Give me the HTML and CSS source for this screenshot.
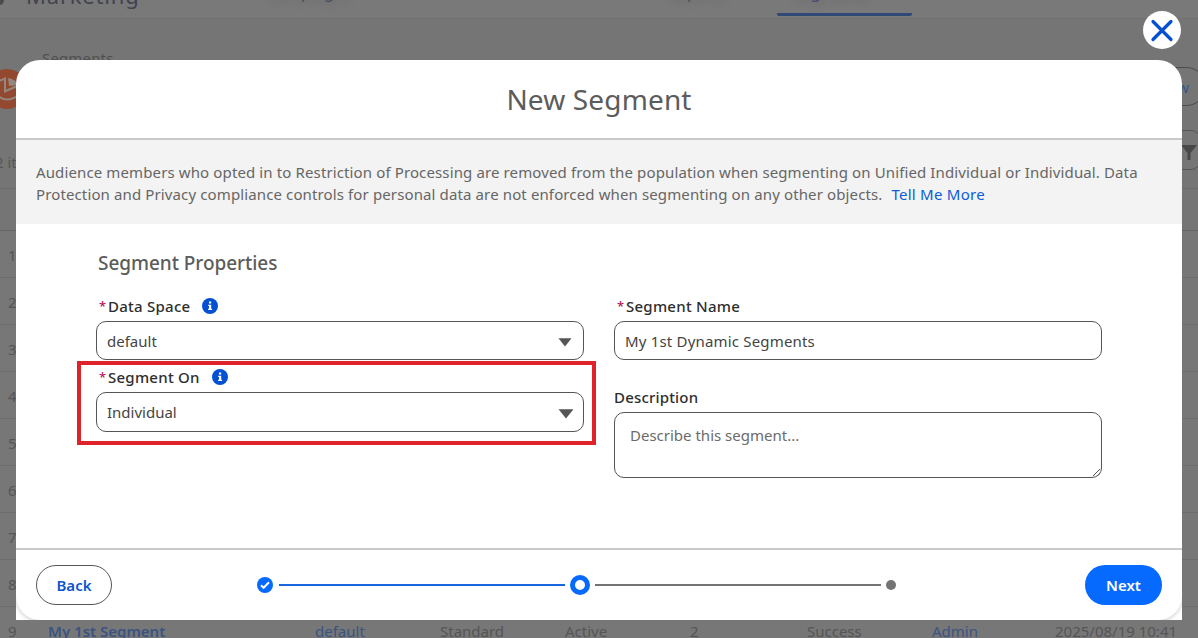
FILE: index.html
```html
<!DOCTYPE html>
<html lang="en">
<head>
<meta charset="utf-8">
<title>New Segment</title>
<link rel="stylesheet" href="styles.css">
</head>
<body>
<div class="app">
  <nav class="nav">
    <span class="dot"></span>
    <span class="brand">Marketing</span>
    <span class="tab tab-campaigns">Campaigns</span>
    <span class="tab tab-reports">Reports</span>
    <span class="tab tab-segments">Segments</span>
  </nav>
  <header class="page-head">
    <span class="crumb">Segments</span>
    <div class="head-row">
      <svg class="logo" viewBox="0 0 40 40"><circle cx="20" cy="20" r="20" fill="#93492f"/><path d="M12 12l6-2.5v13l11-5" fill="none" stroke="#93887f" stroke-width="2"/><path d="M21 9q7 1 10 7l-9 1z" fill="#93887f"/><path d="M10 26q9 9 22 0" fill="none" stroke="#93887f" stroke-width="2"/></svg>
      <span class="new-btn">New</span>
    </div>
    <div class="tools-row">
      <span class="count">2 items</span>
      <span class="filter-btn"><svg width="16" height="15" viewBox="0 0 16 15"><path d="M0 0h16L9.5 8v7h-3V8z" fill="#484848"/></svg></span>
    </div>
  </header>
  <div class="table">
    <div class="thead"></div>
    <div class="row"><span class="num">1</span></div>
    <div class="row"><span class="num">2</span></div>
    <div class="row"><span class="num">3</span></div>
    <div class="row"><span class="num">4</span></div>
    <div class="row"><span class="num">5</span></div>
    <div class="row"><span class="num">6</span></div>
    <div class="row"><span class="num">7</span></div>
    <div class="row"><span class="num">8</span></div>
    <div class="row"><span class="num">9</span><b class="lnk">My 1st Segment</b><span class="lnk">default</span><span>Standard</span><span>Active</span><span>2</span><span>Success</span><span class="lnk">Admin</span><span class="date">2025/08/19 10:41</span></div>
  </div>
</div>

<button class="close" aria-label="Close"><svg width="38" height="38" viewBox="0 0 38 38"><path d="M10 10.5L28 28.5M28 10.5L10 28.5" stroke="#0450d2" stroke-width="3.2" stroke-linecap="round"/></svg></button>

<section class="modal">
  <header class="modal-head"><h1>New Segment</h1></header>
  <div class="notice">
    <div class="n1">Audience members who opted in to Restriction of Processing are removed from the population when segmenting on Unified Individual or Individual. Data</div>
    <div class="n2">Protection and Privacy compliance controls for personal data are not enforced when segmenting on any other objects. <a>Tell Me More</a></div>
  </div>
  <div class="body">
    <h2>Segment Properties</h2>
    <div class="cols">
      <div class="col">
        <div class="label req">Data Space <svg class="info" viewBox="0 0 16 16"><circle cx="8" cy="8" r="8" fill="#0450d2"/><path d="M7 3.5h2.2v2H7zM6.2 6.8h3v4h.9v1.3H6.1v-1.3H7V8h-.8z" fill="#fff"/></svg></div>
        <div class="input select"><span>default</span><svg class="arrow" width="14" height="9" viewBox="0 0 14 9"><path d="M.5 .3h13L7 8.6z" fill="#555"/></svg></div>
        <div class="label req second">Segment On <svg class="info" viewBox="0 0 16 16"><circle cx="8" cy="8" r="8" fill="#0450d2"/><path d="M7 3.5h2.2v2H7zM6.2 6.8h3v4h.9v1.3H6.1v-1.3H7V8h-.8z" fill="#fff"/></svg></div>
        <div class="input select tall"><span>Individual</span><svg class="arrow" width="16" height="10" viewBox="0 0 16 10"><path d="M.5 .3h15L8 9.6z" fill="#555"/></svg></div>
        <div class="highlight"></div>
      </div>
      <div class="col">
        <div class="label req name">Segment Name</div>
        <div class="input"><span class="name-val">My 1st Dynamic Segments</span></div>
        <div class="label desc">Description</div>
        <div class="area"><span>Describe this segment...</span><svg class="grip" width="9" height="9" viewBox="0 0 9 9"><path d="M1 8L8 1M5 8.2L8.2 5" stroke="#555"/></svg></div>
      </div>
    </div>
  </div>
  <footer class="foot">
    <button class="btn">Back</button>
    <div class="steps">
      <svg class="done" width="16" height="16" viewBox="0 0 16 16"><circle cx="8" cy="8" r="8" fill="#066afe"/><path d="M4 8.3l2.6 2.5L12 5.3" fill="none" stroke="#fff" stroke-width="2"/></svg>
      <span class="line blue"></span>
      <span class="current"></span>
      <span class="line"></span>
      <span class="todo"></span>
    </div>
    <button class="btn primary">Next</button>
  </footer>
</section>
</body>
</html>
```
FILE: styles.css
```css
* { box-sizing: border-box; }
body {
  margin: 0;
  width: 1198px;
  height: 638px;
  overflow: hidden;
  position: relative;
  font: 15px/22px "Noto Sans", sans-serif;
  color: #2e2e2e;
  background: #757575;
}
h1, h2 { margin: 0; }
button { font-family: inherit; padding: 0; border: 0; }

/* dimmed page */
.app { position: absolute; inset: 0; overflow: hidden; color: #555; }
.nav { height: 19px; background: #797979; border-bottom: 1px solid #717171; display: flex; }
.dot { width: 8px; height: 10px; margin: -5px 0 0 -4px; border-radius: 50%; background: #4c4c4c; }
.brand { width: 125px; margin: -21px 0 0 22px; font-size: 22px; line-height: 32px; color: #40444f; letter-spacing: .8px; }
.tab { margin-top: -17px; line-height: 19px; font-size: 16px; height: 33px; color: #454d5e; text-shadow: 0 4px 6px #5554; }
.tab-campaigns { margin-left: 116px; width: 90px; }
.tab-reports { margin-left: 311px; width: 109px; }
.tab-segments { width: 135px; padding-left: 16px; border-bottom: 3px solid #304977; border-radius: 0 0 2px 2px; color: #4b426e; }
.page-head { height: 170px; border-bottom: 1px solid #6c6c6c; }
.crumb { display: block; padding: 28px 0 0 42px; color: #4f4f4f; letter-spacing: .15px; }
.head-row { display: flex; justify-content: space-between; }
.logo { width: 40px; height: 40px; margin: 0 0 0 -13px; }
.new-btn { width: 76px; height: 39px; margin: -2px -8px 0 0; padding: 8px 16px 0 0; text-align: right; border: 1px solid #4b4b4b; border-radius: 20px; color: #3a5585; }
.tools-row { display: flex; justify-content: space-between; }
.count { margin: 42px 0 0 -5px; }
.filter-btn { width: 60px; height: 40px; margin: 21px -3px 0 0; border: 1px solid #555; border-radius: 10px; padding: 12px 0 0 39px; }
.thead { height: 42px; border-bottom: 1px solid #656565; }
.row { height: 47px; border-bottom: 1px solid #6d6d6d; display: grid; grid-template-columns: 48px 267px 125px 125px 125px 117px 125px 125px 150px; padding-top: 13px; background: #777; white-space: nowrap; }
.num { padding-left: 8px; }
.lnk { color: #3a5482; }
.row b { font-weight: 600; }
.row .date { margin-left: -2px; }

.close { position: absolute; left: 1143px; top: 11px; width: 38px; height: 38px; border-radius: 50%; background: #fff; }
.close svg { display: block; }

/* dialog */
.modal { position: absolute; left: 16px; top: 60px; width: 1166px; height: 560px; background: #fff; border-radius: 24px 24px 0 0; display: flex; flex-direction: column; overflow: hidden; }
.modal-head { height: 80px; border-bottom: 2px solid #c9c9c9; text-align: center; }
.modal-head h1 { font-size: 28px; line-height: 38px; font-weight: 400; color: #5c5c5c; padding-top: 20px; letter-spacing: .15px; }
.notice { height: 84px; background: #f3f3f3; padding: 21px 20px; color: #666; white-space: nowrap; letter-spacing: .123px; }
.notice a { color: #0b5cd8; margin-left: 5px; letter-spacing: .25px; }
.body { height: 324px; padding: 26px 80px 0; }
h2 { font-size: 19px; line-height: 26px; font-weight: 500; color: #5c5c5c; padding-left: 2px; letter-spacing: -.05px; }
.cols { display: grid; grid-template-columns: 488px 488px; gap: 30px; padding-top: 19px; }
.col { position: relative; }
.label { height: 26px; line-height: 22px; font-weight: 500; display: flex; align-items: flex-start; white-space: nowrap; letter-spacing: .25px; }
.req::before { content: "*"; color: #b8145b; width: 9px; margin-left: 3px; font-size: 13px; letter-spacing: 0; }
.label.second { margin-top: 6px; }
.info { width: 16px; height: 16px; margin: 3px 0 0 12px; }
.input { height: 39px; border: 1px solid #555; border-radius: 10px; padding: 0 11px 0 10px; display: flex; align-items: center; justify-content: space-between; color: #444; }
.name-val { letter-spacing: .18px; }
.input.tall { height: 40px; padding-right: 9px; }
.arrow { margin-top: 3px; }
.highlight { position: absolute; left: -19px; top: 66px; width: 519px; height: 84px; border: 4px solid #e0232b; }
.desc { margin-top: 26px; letter-spacing: .18px; }
.area { height: 66px; border: 1px solid #555; border-radius: 10px; padding: 11px 15px; color: #6b6b6b; position: relative; }
.grip { position: absolute; right: 0; bottom: 0; }
.foot { height: 72px; border-top: 2px solid #c9c9c9; padding: 15px 20px 0; display: flex; position: relative; }
.foot::after { content: ""; position: absolute; inset: -40px 0 0; border-radius: 0 0 24px 24px; box-shadow: 0 1px 4px rgba(0, 0, 0, .22); clip-path: inset(60px 0 0); pointer-events: none; }
.btn { width: 76px; height: 40px; border: 1px solid #555; border-radius: 20px; background: #fff; color: #0b55cc; font-size: 15px; font-weight: 600; flex: none; }
.btn.primary { width: 77px; background: #066afe; border: 0; color: #fff; }
.steps { height: 40px; width: 639px; display: flex; align-items: center; flex: none; margin: 0 189px 0 145px; }
.steps > * { flex: none; }
.line { height: 2px; width: 286px; background: #747474; margin-left: 5px; }
.line.blue { background: #1667e0; margin-left: 6px; }
.current { width: 20px; height: 20px; border: 5px solid #066afe; border-radius: 50%; margin-left: 5px; }
.todo { width: 10px; height: 10px; border-radius: 50%; background: #747474; margin-left: 5px; }
```
